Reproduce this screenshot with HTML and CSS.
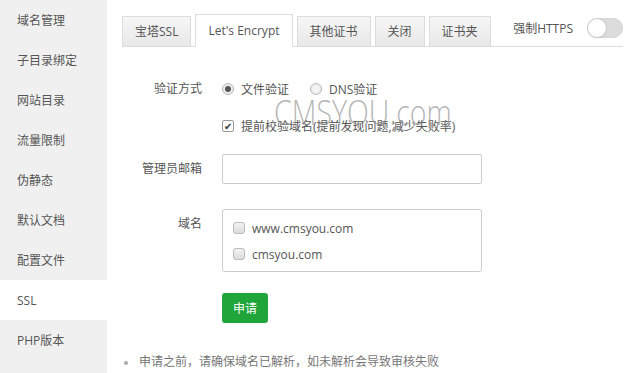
FILE: index.html
```html
<!DOCTYPE html>
<html lang="zh-CN">
<head>
  <meta charset="UTF-8">
  <meta name="viewport" content="width=device-width, initial-scale=1.0">
  <title>SSL</title>
  <link rel="stylesheet" href="styles.css">
</head>
<body>
  <div class="page">
    <div class="side">
      <div class="side-item">域名管理</div>
      <div class="side-item">子目录绑定</div>
      <div class="side-item">网站目录</div>
      <div class="side-item">流量限制</div>
      <div class="side-item">伪静态</div>
      <div class="side-item">默认文档</div>
      <div class="side-item">配置文件</div>
      <div class="side-item active">SSL</div>
      <div class="side-item">PHP版本</div>
    </div>

    <div class="main">
      <div class="tabbar">
        <div class="tab">宝塔SSL</div>
        <div class="tab on">Let's Encrypt</div>
        <div class="tab">其他证书</div>
        <div class="tab">关闭</div>
        <div class="tab">证书夹</div>
        <div class="force">
          <span>强制HTTPS</span>
          <span class="switch"><span class="knob"></span></span>
        </div>
      </div>

      <div class="form">
        <div class="row row-verify">
          <div class="label">验证方式</div>
          <div class="field">
            <span class="radio checked"></span><span class="opt">文件验证</span>
            <span class="radio"></span><span class="opt">DNS验证</span>
          </div>
        </div>
        <div class="row row-check">
          <div class="label"></div>
          <div class="field">
            <span class="check checked">&#10004;</span><span class="opt">提前校验域名(提前发现问题,减少失败率)</span>
          </div>
        </div>
        <div class="row row-email">
          <div class="label">管理员邮箱</div>
          <div class="field"><div class="input"></div></div>
        </div>
        <div class="row row-domain">
          <div class="label">域名</div>
          <div class="field">
            <div class="domain-box">
              <div class="domain"><span class="check"></span><span class="opt">www.cmsyou.com</span></div>
              <div class="domain"><span class="check"></span><span class="opt">cmsyou.com</span></div>
            </div>
          </div>
        </div>
        <div class="row row-btn">
          <div class="label"></div>
          <div class="field"><button class="btn">申请</button></div>
        </div>
      </div>

      <ul class="notes">
        <li>申请之前，请确保域名已解析，如未解析会导致审核失败</li>
      </ul>

      <div class="watermark">CMSYOU.com</div>
    </div>
  </div>
</body>
</html>
```

FILE: styles.css
```css
body {
  margin: 0;
  font-family: "Open Sans", "Noto Sans CJK SC", sans-serif;
  font-size: 12px;
  color: #555;
  background: #fff;
}

.page {
  display: flex;
  height: 373px;
  overflow: hidden;
}

/* left menu */
.side {
  width: 107px;
  flex-shrink: 0;
  background: #f0f0f0;
}

.side-item {
  height: 40px;
  line-height: 41px;
  padding-left: 17px;
  color: #555;
}

.side-item.active {
  background: #fff;
}

/* right part */
.main {
  flex: 1;
  position: relative;
  padding: 15px 13px 0 15px;
}

.tabbar {
  display: flex;
  align-items: flex-end;
  height: 31px;
  border-bottom: 1px solid #ddd;
}

.tab {
  box-sizing: border-box;
  height: 31px;
  line-height: 29px;
  padding: 0 12px;
  margin-right: 4px;
  margin-bottom: -1px;
  border: 1px solid #ddd;
  background: linear-gradient(#f6f6f6, #e8e8e8);
  color: #555;
}

.tab.on {
  height: 33px;
  line-height: 31px;
  background: #fff;
  border-bottom-color: #fff;
}

.force {
  margin-left: auto;
  align-self: flex-start;
  display: flex;
  align-items: center;
  height: 22px;
  margin-top: 2px;
}

.switch {
  position: relative;
  width: 34px;
  height: 18px;
  margin-left: 14px;
  border-radius: 10px;
  background: #dcdcdc;
  border: 1px solid #d4d4d4;
}

.knob {
  position: absolute;
  left: 0;
  top: 0;
  width: 18px;
  height: 18px;
  border-radius: 50%;
  background: #fff;
  box-shadow: 0 0 0 1px #cfcfcf, 0 1px 2px rgba(0, 0, 0, 0.15);
}

/* form */
.form {
  margin-top: 27px;
}

.row {
  display: flex;
}

.label {
  width: 80px;
  flex-shrink: 0;
  text-align: right;
  line-height: 30px;
  margin-right: 20px;
  color: #555;
}

.field {
  display: flex;
  align-items: center;
  min-height: 30px;
}

.row-check { margin-top: 7px; }
.row-email { margin-top: 13px; }
.row-domain { margin-top: 25px; }
.row-btn { margin-top: 21px; }

.radio {
  box-sizing: border-box;
  display: inline-block;
  width: 12px;
  height: 12px;
  border-radius: 50%;
  border: 1px solid #bbb;
  background: radial-gradient(circle, #f4f4f4 40%, #dedede 100%);
  margin-right: 7px;
  position: relative;
}

.radio.checked::after {
  content: "";
  position: absolute;
  left: 2px;
  top: 2px;
  width: 6px;
  height: 6px;
  border-radius: 50%;
  background: #555;
}

.opt {
  color: #555;
  margin-right: 21px;
}

.check {
  box-sizing: border-box;
  display: inline-block;
  width: 12px;
  height: 12px;
  border: 1px solid #bbb;
  border-radius: 2px;
  background: linear-gradient(#f2f2f2, #dcdcdc);
  margin-right: 7px;
  font-size: 10px;
  line-height: 10px;
  text-align: center;
  color: #333;
}

.check.checked {
  border-color: #999;
  background: #fff;
}

.input {
  box-sizing: border-box;
  width: 260px;
  height: 30px;
  border: 1px solid #ccc;
  border-radius: 2px;
}

.domain-box {
  box-sizing: border-box;
  width: 260px;
  height: 63px;
  padding: 5px 10px;
  border: 1px solid #ccc;
  border-radius: 3px;
}

.domain {
  display: flex;
  align-items: center;
  height: 26px;
}

.domain .check {
  border-radius: 3px;
}

.btn {
  width: 46px;
  height: 30px;
  border: none;
  border-radius: 3px;
  background: #20a53a;
  color: #fff;
  font-family: "Open Sans", "Noto Sans CJK SC", sans-serif;
  font-size: 12px;
  padding: 0;
}

.notes {
  margin: 29px 0 0;
  padding: 0 0 0 17px;
  color: #777;
  list-style: none;
}

.notes li {
  line-height: 20px;
  position: relative;
}

.notes li::before {
  content: "";
  position: absolute;
  left: -15px;
  top: 9px;
  width: 4px;
  height: 4px;
  border-radius: 50%;
  background: #aaa;
}

/* overlay text stamped on the screenshot */
.watermark {
  position: absolute;
  left: 167px;
  top: 89px;
  font-size: 34px;
  font-weight: 300;
  color: rgba(140, 140, 140, 0.65);
  transform: scaleX(0.84);
  transform-origin: left top;
  pointer-events: none;
}
```
